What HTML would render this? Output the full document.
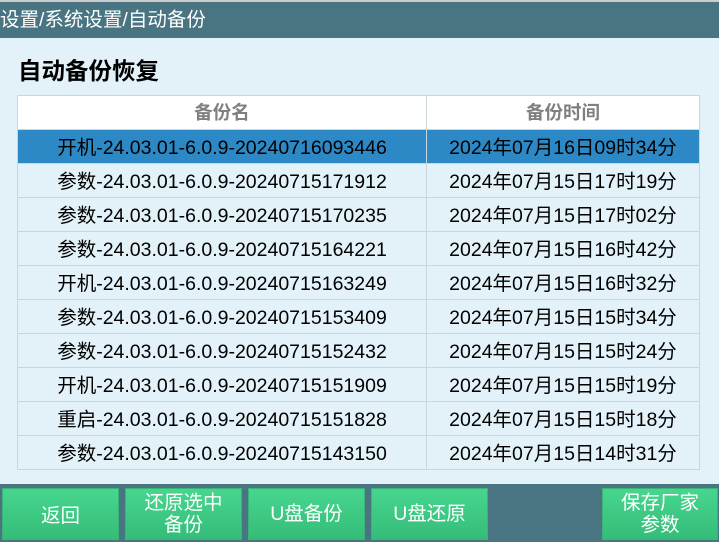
<!DOCTYPE html><html><head><meta charset="utf-8"><style>
*{margin:0;padding:0;box-sizing:border-box}
body{width:719px;height:542px;overflow:hidden;background:#e3f2f8;font-family:"Liberation Sans","Noto Sans CJK SC",sans-serif;position:relative}
.top{position:absolute;left:0;top:0;width:719px;height:2px;background:#ccc}
.hdr{position:absolute;left:0;top:2px;width:719px;height:36px;background:#487581;color:#fff;font-size:19.5px;line-height:36px;padding-left:0}
.title{position:absolute;left:18px;top:52px;font-size:23.5px;font-weight:bold;color:#000}
table{position:absolute;left:17px;top:95px;width:683px;border-collapse:collapse;font-size:19.5px}
td,th{height:34px;text-align:center;border:1px solid #c9d6dc;padding:0 0 2px 0}
th{background:#fff;color:#808080;font-weight:bold;font-size:18.5px}
td{background:#e3f2f8;color:#000}
tr.sel td{background:#2c89c6}
.c1{width:409px}
.bar{position:absolute;left:0;top:484px;width:719px;height:58px;background:#487581}
.b{position:absolute;top:488px;height:52px;background:linear-gradient(#47d68f,#35bd78);color:#fff;font-size:19.5px;display:flex;align-items:center;justify-content:center;text-align:center;line-height:22px;border:1px solid #3ab374}
</style></head><body>
<div class="top"></div>
<div class="hdr">设置/系统设置/自动备份</div>
<div class="title">自动备份恢复</div>
<table>
<tr><th class="c1">备份名</th><th>备份时间</th></tr>
<tr class="sel"><td>开机-24.03.01-6.0.9-20240716093446</td><td>2024年07月16日09时34分</td></tr>
<tr><td>参数-24.03.01-6.0.9-20240715171912</td><td>2024年07月15日17时19分</td></tr>
<tr><td>参数-24.03.01-6.0.9-20240715170235</td><td>2024年07月15日17时02分</td></tr>
<tr><td>参数-24.03.01-6.0.9-20240715164221</td><td>2024年07月15日16时42分</td></tr>
<tr><td>开机-24.03.01-6.0.9-20240715163249</td><td>2024年07月15日16时32分</td></tr>
<tr><td>参数-24.03.01-6.0.9-20240715153409</td><td>2024年07月15日15时34分</td></tr>
<tr><td>参数-24.03.01-6.0.9-20240715152432</td><td>2024年07月15日15时24分</td></tr>
<tr><td>开机-24.03.01-6.0.9-20240715151909</td><td>2024年07月15日15时19分</td></tr>
<tr><td>重启-24.03.01-6.0.9-20240715151828</td><td>2024年07月15日15时18分</td></tr>
<tr><td>参数-24.03.01-6.0.9-20240715143150</td><td>2024年07月15日14时31分</td></tr>
</table>
<div class="bar"></div>
<div class="b" style="left:2px;width:117px;padding-top:4px">返回</div>
<div class="b" style="left:125px;width:117px">还原选中<br>备份</div>
<div class="b" style="left:248px;width:117px">U盘备份</div>
<div class="b" style="left:371px;width:117px">U盘还原</div>
<div class="b" style="left:602px;width:116px">保存厂家<br>参数</div>
</body></html>
